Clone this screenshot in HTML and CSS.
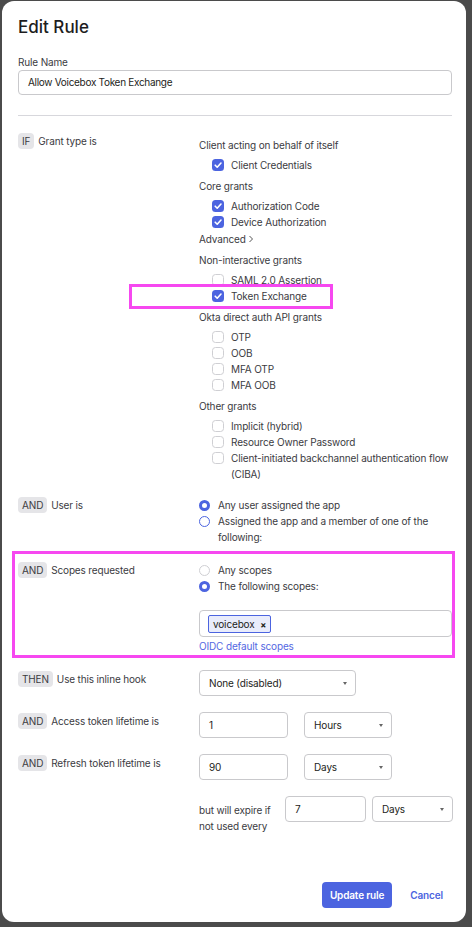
FILE: index.html
```html
<!DOCTYPE html>
<html>
<head>
<meta charset="utf-8">
<link rel="stylesheet" href="styles.css">
</head>
<body>
<div class="modal">
  <h1 class="title">Edit Rule</h1>
  <label class="field-label">Rule Name</label>
  <div class="textbox wide">Allow Voicebox Token Exchange</div>
  <hr class="divider">

  <div class="row">
    <div class="cond"><span class="badge">IF</span><span>Grant type is</span></div>
    <div class="opts grants">
      <div class="group">
        <div class="gh">Client acting on behalf of itself</div>
        <div class="cb"><span class="box on"></span>Client Credentials</div>
      </div>
      <div class="group">
        <div class="gh">Core grants</div>
        <div class="cb"><span class="box on"></span>Authorization Code</div>
        <div class="cb"><span class="box on"></span>Device Authorization</div>
        <div class="adv">Advanced <svg width="6" height="8" viewBox="0 0 6 8"><path d="M1.5 1l3 3-3 3" fill="none" stroke="#555" stroke-width="1"/></svg></div>
      </div>
      <div class="group">
        <div class="gh">Non-interactive grants</div>
        <div class="cb"><span class="box"></span>SAML 2.0 Assertion</div>
        <div class="cb hl"><span class="box on"></span>Token Exchange<span class="mark mark-token"></span></div>
      </div>
      <div class="group">
        <div class="gh">Okta direct auth API grants</div>
        <div class="cb"><span class="box"></span>OTP</div>
        <div class="cb"><span class="box"></span>OOB</div>
        <div class="cb"><span class="box"></span>MFA OTP</div>
        <div class="cb"><span class="box"></span>MFA OOB</div>
      </div>
      <div class="group">
        <div class="gh">Other grants</div>
        <div class="cb"><span class="box"></span>Implicit (hybrid)</div>
        <div class="cb"><span class="box"></span>Resource Owner Password</div>
        <div class="cb"><span class="box"></span><span>Client-initiated backchannel authentication flow (CIBA)</span></div>
      </div>
    </div>
  </div>

  <div class="row user">
    <div class="cond"><span class="badge">AND</span><span>User is</span></div>
    <div class="opts">
      <div class="rd"><span class="radio on"></span>Any user assigned the app</div>
      <div class="rd"><span class="radio focus"></span><span>Assigned the app and a member of one of the following:</span></div>
    </div>
  </div>

  <div class="row scopes">
    <span class="mark mark-scopes"></span>
    <div class="cond"><span class="badge">AND</span><span>Scopes requested</span></div>
    <div class="opts">
      <div class="rd"><span class="radio"></span>Any scopes</div>
      <div class="rd"><span class="radio on"></span>The following scopes:</div>
      <div class="tagbox"><span class="tag">voicebox <span class="x">×</span></span></div>
      <a class="link">OIDC default scopes</a>
    </div>
  </div>

  <div class="row act">
    <div class="cond"><span class="badge">THEN</span><span>Use this inline hook</span></div>
    <div class="opts inline">
      <div class="select hook">None (disabled)<span class="caret"></span></div>
    </div>
  </div>

  <div class="row act">
    <div class="cond"><span class="badge">AND</span><span>Access token lifetime is</span></div>
    <div class="opts inline">
      <div class="textbox num">1</div>
      <div class="select unit">Hours<span class="caret"></span></div>
    </div>
  </div>

  <div class="row act">
    <div class="cond"><span class="badge">AND</span><span>Refresh token lifetime is</span></div>
    <div class="opts inline">
      <div class="textbox num">90</div>
      <div class="select unit">Days<span class="caret"></span></div>
    </div>
  </div>

  <div class="row expire">
    <div class="cond"></div>
    <div class="opts inline">
      <div class="exp-text">but will expire if not used every</div>
      <div class="textbox num2">7</div>
      <div class="select unit2">Days<span class="caret"></span></div>
    </div>
  </div>

  <div class="footer">
    <button class="primary">Update rule</button>
    <a class="cancel">Cancel</a>
  </div>
</div>
</body>
</html>
```

FILE: styles.css
```css
html, body {
  margin: 0;
  padding: 0;
}
body {
  width: 472px;
  height: 927px;
  overflow: hidden;
  background: #4b4b4b;
  font-family: Inter, "Liberation Sans", sans-serif;
  font-size: 10px;
  letter-spacing: -0.15px;
  color: #3b3b3f;
}
.modal {
  box-sizing: border-box;
  margin: 1px 0 0 2px;
  width: 464px;
  height: 921px;
  background: #fff;
  border-radius: 12px;
  padding: 14px 14px 0 16px;
  display: flex;
  flex-direction: column;
}
.title {
  margin: 0;
  font-size: 17px;
  line-height: 24px;
  font-weight: 500;
  letter-spacing: 0;
  color: #1d1d21;
}
.field-label {
  display: block;
  margin-top: 16px;
  line-height: 14px;
}
.textbox, .select {
  box-sizing: border-box;
  height: 26px;
  border: 1px solid #c9c9cc;
  border-radius: 4px;
  padding: 0 9px;
  line-height: 24px;
  color: #1d1d21;
  background: #fff;
}
.wide {
  margin-top: 1px;
  height: 25px;
  line-height: 23px;
  letter-spacing: -0.3px;
}
.divider {
  border: 0;
  border-top: 1px solid #d7d7dc;
  margin: 20px 0 17px;
}
.row {
  display: grid;
  grid-template-columns: 181px 1fr;
  position: relative;
}
.cond {
  display: flex;
  align-items: flex-start;
  gap: 4px;
  line-height: 16px;
}
.badge {
  display: inline-block;
  background: #e5e5e8;
  border-radius: 4px;
  padding: 0 4px;
  height: 16px;
  line-height: 16px;
  color: #3b3b3f;
}
.grants {
  padding-top: 4px;
}
.group + .group {
  margin-top: 5px;
}
.gh {
  line-height: 16px;
  margin-bottom: 4px;
}
.cb {
  display: flex;
  align-items: flex-start;
  line-height: 16px;
  padding-left: 13px;
  position: relative;
}
.box {
  flex: none;
  box-sizing: border-box;
  width: 12px;
  height: 12px;
  border-radius: 3.5px;
  border: 1px solid #cfcfd3;
  margin: 2px 7px 0 0;
  background: #fff;
}
.box.on {
  border: 0;
  background: #4c64e0 url("data:image/svg+xml,%3Csvg xmlns='http://www.w3.org/2000/svg' width='12' height='12' viewBox='0 0 12 12'%3E%3Cpath d='M3.2 6.2l2 2 3.8-4.2' fill='none' stroke='white' stroke-width='1.6' stroke-linecap='round' stroke-linejoin='round'/%3E%3C/svg%3E") no-repeat center;
}
.adv {
  line-height: 16px;
  margin-top: 1px;
  display: flex;
  align-items: center;
  gap: 2px;
}
.mark {
  position: absolute;
  border: 3px solid #f648f0;
  box-sizing: border-box;
  pointer-events: none;
}
.mark-token {
  left: -70px;
  top: -4px;
  width: 204px;
  height: 25px;
}
.mark-scopes {
  left: -6px;
  top: -11px;
  width: 443px;
  height: 107px;
}
.user {
  margin-top: 15px;
}
.rd {
  display: flex;
  align-items: flex-start;
  line-height: 16px;
}
.radio {
  flex: none;
  box-sizing: border-box;
  width: 11px;
  height: 11px;
  border-radius: 50%;
  border: 1px solid #cfcfd3;
  margin: 2.5px 8px 0 0;
  background: #fff;
}
.radio.on {
  border: 3px solid #4c64e0;
}
.radio.focus {
  border-color: #4c64e0;
}
.scopes {
  margin-top: 17px;
}
.tagbox {
  box-sizing: border-box;
  margin-top: 16px;
  height: 27px;
  border: 1px solid #c9c9cc;
  border-radius: 4px;
  padding: 4px 8px;
}
.tag {
  display: inline-block;
  box-sizing: border-box;
  height: 18px;
  line-height: 16px;
  padding: 0 4px;
  border: 1px solid #4c64e0;
  border-radius: 2px;
  background: #e9ecfb;
  color: #1d1d21;
}
.tag .x {
  margin-left: 3px;
  font-size: 9px;
  font-weight: 700;
}
.link {
  display: block;
  line-height: 16px;
  margin-top: 1px;
  color: #5468e2;
}
.scopes + .act {
  margin-top: 16px;
}
.act + .act {
  margin-top: 16px;
}
.inline {
  display: flex;
  align-items: flex-start;
  gap: 16px;
}
.act .cond {
  padding-top: 1px;
}
.select {
  position: relative;
  padding-right: 20px;
}
.caret {
  position: absolute;
  right: 8px;
  top: 11px;
  width: 0;
  height: 0;
  border-left: 2.5px solid transparent;
  border-right: 2.5px solid transparent;
  border-top: 3px solid #666;
}
.hook {
  width: 157px;
}
.num {
  width: 89px;
}
.unit {
  width: 88px;
}
.expire {
  margin-top: 16px;
}
.expire .inline {
  gap: 6px;
}
.exp-text {
  width: 80px;
  line-height: 16px;
  padding-top: 6px;
}
.num2 {
  width: 81px;
}
.unit2 {
  width: 81px;
}
.footer {
  margin-top: auto;
  margin-bottom: 14px;
  display: flex;
  justify-content: flex-end;
  align-items: center;
  gap: 18px;
  padding-right: 9px;
}
.primary {
  font-family: inherit;
  font-size: 10px;
  font-weight: 600;
  letter-spacing: -0.15px;
  color: #fff;
  background: #4c64e0;
  border: 0;
  border-radius: 4px;
  height: 26px;
  padding: 0 8px;
}
.cancel {
  font-weight: 600;
  color: #4c64e0;
}
```
